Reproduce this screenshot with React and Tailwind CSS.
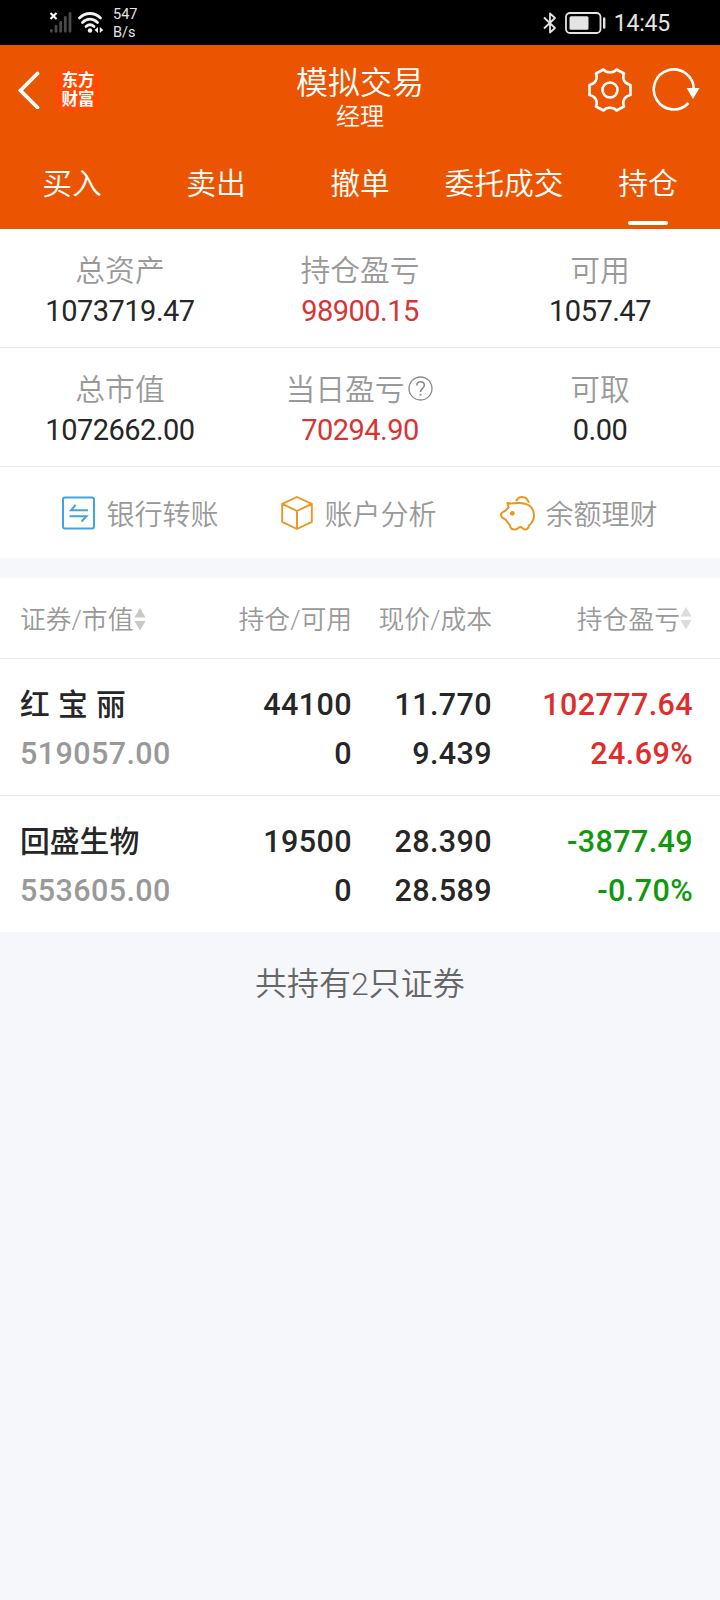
// Summary figures, two rows of three
const summary = [
  [
    { label: "总资产", value: "1073719.47" },
    { label: "持仓盈亏", value: "98900.15", red: true },
    { label: "可用", value: "1057.47" },
  ],
  [
    { label: "总市值", value: "1072662.00" },
    { label: "当日盈亏", value: "70294.90", red: true, help: true },
    { label: "可取", value: "0.00" },
  ],
];

const tabs = ["买入", "卖出", "撤单", "委托成交", "持仓"];

const holdings = [
  {
    name: "红 宝 丽",
    marketValue: "519057.00",
    amount: "44100",
    available: "0",
    price: "11.770",
    cost: "9.439",
    profit: "102777.64",
    rate: "24.69%",
    up: true,
  },
  {
    name: "回盛生物",
    marketValue: "553605.00",
    amount: "19500",
    available: "0",
    price: "28.390",
    cost: "28.589",
    profit: "-3877.49",
    rate: "-0.70%",
    up: false,
  },
];

function StatusBar() {
  return (
    <div className="h-[45px] bg-black text-[#e4e4e4] flex items-center justify-between pl-[49px] pr-[50px]">
      <div className="flex items-center">
        <svg width="24" height="24" viewBox="0 0 24 24" fill="none">
          <path d="M1.500 2l6 6M7.500 2l-6 6" stroke="#fff" strokeWidth="2" />
          <g stroke="#4a4a4a" strokeWidth="2.800" strokeLinecap="round">
            <path d="M2.300 19.500v.8M7 15.500v4.800M11.700 11.500v8.800M16.300 6.500v13.800M21 2.500v17.800" />
          </g>
        </svg>
        <svg className="ml-1" width="27" height="24" viewBox="0 0 27 24" fill="none">
          <g stroke="#f2f2f2" strokeWidth="2.800" strokeLinecap="round">
            <path d="M2.500 7C8.500 1 17.500 1 23.500 7" />
            <path d="M5.500 11.500C10 7.100 16 7.100 20.500 11.500" />
            <path d="M9 15.500C11.500 13.200 14.500 13.200 17 15.500" />
          </g>
          <circle cx="13" cy="19.500" r="2.200" fill="#f2f2f2" />
          <path d="M21 16v6l-3.500-3zM22.800 16v6l3.500-3z" fill="#f2f2f2" />
        </svg>
        <div className="ml-[9px] pt-[3px] text-[14.5px] leading-[18px]">
          <div>547</div>
          <div>B/s</div>
        </div>
      </div>
      <div className="flex items-center">
        <svg width="14" height="24" viewBox="0 0 14 24" fill="none" stroke="#e4e4e4" strokeWidth="1.800">
          <path d="M1 6.500l11 10.500-5 4.500v-19l5 4.500L1 17.500" strokeLinejoin="round" />
        </svg>
        <svg className="ml-[8px]" width="42" height="24" viewBox="0 0 42 24" fill="none">
          <rect x="1" y="2" width="34.500" height="20" rx="4" stroke="#e4e4e4" strokeWidth="1.800" />
          <rect x="4.500" y="5.300" width="19" height="13.400" rx="1.500" fill="#e4e4e4" />
          <path d="M39.200 7.500v9" stroke="#e4e4e4" strokeWidth="2.400" strokeLinecap="round" />
        </svg>
        <span className="ml-[7px] pt-0.5 text-[23px] leading-6 tracking-[-0.2px]">14:45</span>
      </div>
    </div>
  );
}

function GearIcon() {
  return (
    <svg width="44" height="44" viewBox="0 0 44 44" fill="none" stroke="#fff" strokeWidth="2.600" strokeLinejoin="round">
      <path d="M15.500 1.500C18 5.200 26 5.200 28.500 1.500L36 5.500C34 11 36.500 15.800 42.500 17V27C36.500 28.200 34 33 36 38.500L28.500 42.500C26 38.800 18 38.800 15.500 42.500L8 38.500C10 33 7.500 28.200 1.500 27V17C7.500 15.800 10 11 8 5.500Z" />
      <circle cx="22" cy="22" r="7.500" />
    </svg>
  );
}

function RefreshIcon() {
  return (
    <svg width="48" height="44" viewBox="0 0 48 44" fill="none">
      <path d="M36.500 35A20 20 0 1 1 41.800 21" stroke="#fff" strokeWidth="2.600" />
      <path d="M34.500 20h13L41 31z" fill="#fff" />
    </svg>
  );
}

function Header() {
  return (
    <header className="h-[184px] bg-[#eb5502] text-white">
      <div className="grid h-[90px] grid-cols-3">
        <div className="flex items-center pl-[17px]">
          <svg width="23" height="38" viewBox="0 0 23 38" fill="none" stroke="#fff" strokeWidth="3.800">
            <path d="M20.500 2.500L3.500 19.500 20.500 36.500" strokeLinecap="round" />
          </svg>
          <div className="ml-[16px] flex h-11 w-11 flex-col items-center justify-center rounded-[9px] bg-[#ff4a00] text-[16.5px] leading-[19px] font-bold">
            <div>东方</div>
            <div>财富</div>
          </div>
        </div>
        <div className="pt-[18px] text-center">
          <h1 className="text-[32px] leading-[40px] font-[350]">模拟交易</h1>
          <p className="text-2xl leading-[28px] font-[350]">经理</p>
        </div>
        <div className="flex items-center justify-end gap-5 pr-5">
          <GearIcon />
          <RefreshIcon />
        </div>
      </div>
      <nav className="grid h-[94px] grid-cols-5">
        {tabs.map((tab) => (
          <div key={tab} className="flex flex-col items-center pt-[29px]">
            <span className="text-[29.8px] leading-[40px] font-[350] whitespace-nowrap">
              {tab}
            </span>
            {tab === "持仓" && (
              <span className="mt-[17px] h-1 w-10 rounded-full bg-white" />
            )}
          </div>
        ))}
      </nav>
    </header>
  );
}

function HelpIcon() {
  return (
    <svg className="mr-[2px] mb-1 ml-[3px]" width="25" height="25" viewBox="0 0 25 25" fill="none" stroke="#8a8a8a">
      <circle cx="12.500" cy="12.500" r="11.500" strokeWidth="1.300" />
      <path d="M8.800 9.500c0-2 1.500-3.700 3.700-3.700s3.800 1.500 3.800 3.500c0 3-3.800 3.200-3.800 6.700" strokeWidth="1.600" />
      <path d="M12.500 17.800v1.800" strokeWidth="1.800" />
    </svg>
  );
}

function SummaryRow({ items }) {
  return (
    <div className="grid h-[119px] grid-cols-3 border-b border-[#e8e8e8] pt-[22px]">
      {items.map((item) => (
        <div key={item.label} className="flex flex-col items-center">
          <div className="flex h-10 items-center pt-px text-[29.8px] font-[350] text-[#999]">
            {item.label}
            {item.help && <HelpIcon />}
          </div>
          <div
            className={`text-[29px] leading-[40px] tracking-[-0.5px] ${
              item.red ? "text-[#d93434]" : "text-[#262626]"
            }`}
          >
            {item.value}
          </div>
        </div>
      ))}
    </div>
  );
}

function TransferIcon() {
  return (
    <svg width="33" height="34" viewBox="0 0 33 34" fill="none" stroke="#3fa5e0" strokeWidth="2">
      <rect x="1" y="1.500" width="31" height="31" rx="2" />
      <path d="M13.500 9L9 14.300h17M7.500 20.300h17L19.500 25.500" />
    </svg>
  );
}

function CubeIcon() {
  return (
    <svg width="32" height="34" viewBox="0 0 32 34" fill="none" stroke="#eb961e" strokeWidth="1.900" strokeLinejoin="round">
      <path d="M16 1l14.800 6.800v18L16 33 1.200 25.800v-18zM1.200 7.800L16 15l14.800-7.200M16 15v18" />
    </svg>
  );
}

function PiggyIcon() {
  return (
    <svg width="35" height="36" viewBox="0 0 35 36" fill="none" stroke="#eb961e" strokeWidth="2" strokeLinejoin="round">
      <path d="M7.500 8C11 9 14 8 19 8C27 8 34 11.500 34 20.500C34 25 32 28 29 30.500C28.500 33 27 34.500 25 34.500C22.500 34.500 22.500 32 20.500 32C18 32 18 34.500 15 34.500C11 34.500 10.500 33 10 30.500L6 25C4 23.500 1 23 1 19.800C1 16.500 4 17 5.500 15.500L8.500 12.500Z" />
      <path d="M16.500 5.500C19 .5 26 .5 28.500 7" strokeLinecap="round" />
      <circle cx="12.300" cy="18.300" r="2.400" fill="#eb961e" stroke="none" />
    </svg>
  );
}

function Action({ icon, label }) {
  return (
    <div className="flex items-center gap-[11px] text-[28px] leading-[40px] font-[350] text-[#999]">
      {icon}
      <span className="pt-[6px]">{label}</span>
    </div>
  );
}

function SortIcon({ light }) {
  return (
    <svg
      className={light ? "mb-1 text-[#dcdcdc]" : "mb-[3px] ml-px text-[#c8c8c8]"}
      width="12"
      height="24"
      viewBox="0 0 12 24"
      fill="currentColor"
    >
      <path d="M6 1l5.500 9.500H.5zM6 23.500L.5 14h11z" />
    </svg>
  );
}

function HoldingRow({ item }) {
  const color = item.up ? "text-[#e12c2c]" : "text-[#12980f]";
  return (
    <div className="grid h-[137px] grid-cols-[192px_140px_140px_201px] border-b border-[#e8e8e8] pt-[21px] pl-5 text-right text-[30.5px] leading-[49px] font-medium tracking-[0.4px] text-[#262626] last:h-[136px] last:border-b-0">
      <div className="text-left">
        <div className="h-[49px] text-[29.8px] leading-[49px] tracking-normal [word-spacing:0.8px]">
          {item.name}
        </div>
        <div className="text-[#999]">{item.marketValue}</div>
      </div>
      <div>
        <div>{item.amount}</div>
        <div>{item.available}</div>
      </div>
      <div>
        <div>{item.price}</div>
        <div>{item.cost}</div>
      </div>
      <div className={color}>
        <div>{item.profit}</div>
        <div>{item.rate}</div>
      </div>
    </div>
  );
}

export default function App() {
  return (
    <div className="min-h-[1600px] w-[720px] bg-[#f6f7fa] font-[Roboto,'Noto_Sans_CJK_SC',sans-serif]">
      <StatusBar />
      <Header />

      {/* Account summary */}
      <section className="bg-white">
        {summary.map((items, i) => (
          <SummaryRow key={i} items={items} />
        ))}
        <div className="flex h-[91px] items-center justify-center gap-[63px]">
          <Action icon={<TransferIcon />} label="银行转账" />
          <Action icon={<CubeIcon />} label="账户分析" />
          <Action icon={<PiggyIcon />} label="余额理财" />
        </div>
      </section>

      {/* Holdings */}
      <section className="mt-5 bg-white">
        <div className="grid h-[81px] grid-cols-[192px_140px_140px_201px] items-center border-b border-[#e8e8e8] pt-[4px] pl-5 text-[25.8px] font-[350] whitespace-nowrap text-[#999]">
          <div className="flex items-center">
            证券/市值
            <SortIcon />
          </div>
          <div className="text-right">持仓/可用</div>
          <div className="text-right">现价/成本</div>
          <div className="flex items-center justify-end pr-px">
            持仓盈亏
            <SortIcon light />
          </div>
        </div>
        <div>
          {holdings.map((item) => (
            <HoldingRow key={item.name} item={item} />
          ))}
        </div>
      </section>

      <p className="pt-[31px] text-center text-[32px] leading-[42px] font-[350] text-[#666]">
        共持有2只证券
      </p>
    </div>
  );
}
